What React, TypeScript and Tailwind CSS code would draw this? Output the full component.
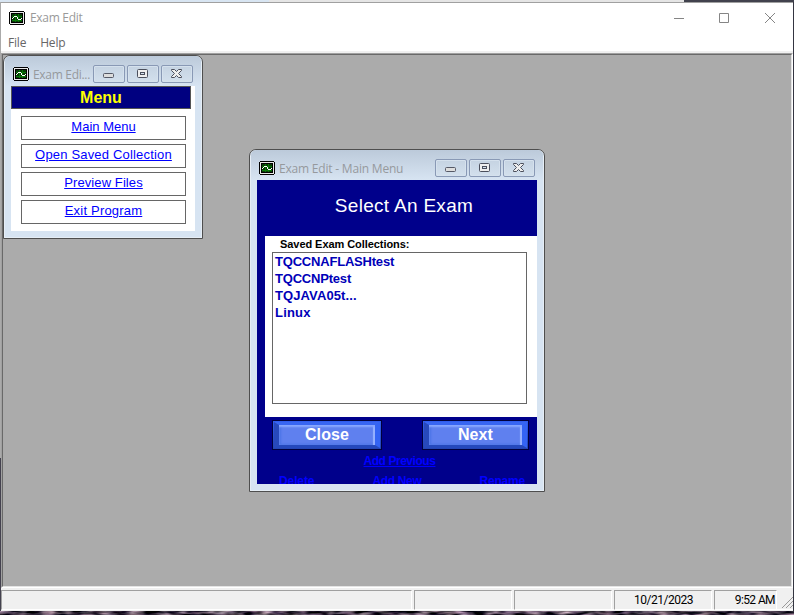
import type { ReactNode } from "react";

const ui = "font-['Open_Sans','Noto_Sans',sans-serif]";
const arial = "font-['Liberation_Sans',Arial,sans-serif]";

function AppIcon() {
  return (
    <svg width="16" height="14" viewBox="0 0 16 14" shapeRendering="crispEdges" className="shrink-0">
      <path d="M1 0h14v1h1v12h-1v1H1v-1H0V1h1z" fill="#000" />
      <path d="M1 1h14v12H1z" fill="#e8e8e8" />
      <path d="M2 2h12v10H2z" fill="#000" />
      <path d="M3 3h10v8H3z" fill="#063c06" />
      <path d="M3 5h10M3 9h10M6.500 3v8M9.500 3v8" stroke="#087808" fill="none" />
      <path d="M3 7h1v1H3zM4 6h1v1H4zM5 5h3v1H5zM8 6h1v2H8zM9 8h3v1H9zM12 7h1v1h-1z" fill="#fff" />
    </svg>
  );
}

function CaptionButtons() {
  const frame =
    "flex h-[18px] w-8 items-center justify-center rounded-[2px] border border-[#8999b5] bg-linear-to-b from-[#c5d3e2] to-[#d3e0ed] shadow-[inset_0_0_0_1px_#d5e1ed]";
  return (
    <div className="flex shrink-0 gap-0.5">
      <div className={frame}>
        <svg width="12" height="12">
          <rect x="0.500" y="5.500" width="10" height="4" rx="1" fill="#ddd" stroke="#555966" />
        </svg>
      </div>
      <div className={frame}>
        <svg width="12" height="12">
          <rect x="0.500" y="1.500" width="10" height="8" rx="1" fill="#eee" stroke="#4b4f5c" />
          <rect x="3.500" y="4.500" width="4" height="2" fill="#d5e1ed" stroke="#4b4f5c" />
        </svg>
      </div>
      <div className={frame}>
        <svg width="12" height="12">
          <path d="M.5 1.500H3.500L5.500 3.500L7.500 1.500H10.500V2.500L7.500 5.500L10.500 8.500V9.500H7.500L5.500 7.500L3.500 9.500H.5V8.500L3.500 5.500L.5 2.500Z" fill="#eee" stroke="#4b4f5c" />
        </svg>
      </div>
    </div>
  );
}

function ChildWindow({ title, place, titleClass, children }: { title: string; place: string; titleClass: string; children: ReactNode }) {
  return (
    <section className={`absolute flex flex-col overflow-hidden rounded-t-[7px] border border-[#4e4e4e] bg-[#d7e4f2] px-[7px] pb-[7px] shadow-[inset_0_0_0_1px_#e6eef6] ${place}`}>
      <header className="-mx-[6px] flex h-[30px] shrink-0 items-start rounded-t-[5px] bg-linear-to-b from-[#bccada] to-[#d7e4f2] pr-[8px] pl-[8px] pt-[9px]">
        <div className="pt-[2px]"><AppIcon /></div>
        <span className={`${ui} ml-1 h-[18px] grow text-[12px] leading-[20px] whitespace-nowrap text-[#96999d] ${titleClass}`}>{title}</span>
        <CaptionButtons />
      </header>
      {children}
    </section>
  );
}

const menuItems = [
  { text: "Main Menu", spacing: "tracking-[0px]" },
  { text: "Open Saved Collection", spacing: "tracking-[0.18px]" },
  { text: "Preview Files", spacing: "tracking-[0.1px]" },
  { text: "Exit Program", spacing: "tracking-[0.2px]" },
];

function BevelButton({ text, width }: { text: string; width: string }) {
  return (
    <div className={`${width} h-[30px] border border-[#00003c] bg-linear-to-b from-[#2f5df0] to-[#2344b4] p-px`}>
      <div className="flex h-full items-center justify-center border-y-[3px] border-r-[5px] border-l-[5px] border-t-[#3866f2] border-r-[#3464f4] border-b-[#2549bd] border-l-[#2749bb] bg-[#5f80ef] shadow-[inset_0_2px_2px_#8aa8ff,inset_-2px_0_1px_#9bb4ff,inset_2px_-1px_2px_#4770e6]">
        <span className={`${arial} text-[16px] leading-[18px] font-bold tracking-[0.1px] text-white`}>{text}</span>
      </div>
    </div>
  );
}

export default function App() {
  const cell = "h-5 border border-t-[#a0a0a0] border-l-[#a0a0a0] border-r-white border-b-white";
  return (
    <div className="flex h-[615px] w-[794px] flex-col overflow-hidden bg-[#343541]">
      <div className="flex h-0.5 shrink-0">
        <div className="w-[269px] bg-[#d8e5f2]" />
        <div className="w-[415px] bg-[#e5e5e5]" />
        <div className="grow bg-[#41424d]" />
      </div>
      <div className="flex h-[609px] shrink-0">
        <div className="flex w-px flex-col">
          <div className="h-[456px] bg-[#aaa]" />
          <div className="grow bg-[#44424f]" />
        </div>
        <main className="flex w-[792px] flex-col border-t border-[#a0a0a0] bg-[#f0f0f0]">
          <div className="flex h-[30px] shrink-0 items-center bg-white pl-2 pb-px">
            <AppIcon />
            <span className={`${ui} ml-[5px] pt-px text-[12px] tracking-[-0.3px] text-[#999]`}>Exam Edit</span>
            <svg className="ml-auto mr-[17px]" width="103" height="14" fill="none" stroke="#858585">
              <path d="M1 7.500h10M46.500 2.500h9v9h-9zM92 2l10 10M102 2l-10 10" />
            </svg>
          </div>
          <nav className={`${ui} flex h-[18px] shrink-0 items-center gap-[14px] bg-white pt-[2px] pl-[7px] text-[12px] tracking-[-0.2px] text-[#666]`}>
            <span>File</span>
            <span>Help</span>
          </nav>
          <div className="h-0.5 shrink-0 bg-[#f0f0f0]" />
          <div className="h-[535px] shrink-0 border border-t-[#a0a0a0] border-r-white border-b-white border-l-[#a0a0a0]">
            <div className="relative h-[533px] border border-t-[#696969] border-r-[#e3e3e3] border-b-[#e3e3e3] border-l-[#696969] bg-[#ababab]">
              <ChildWindow title="Exam Edi..." place="left-0 top-0 h-[184px] w-[200px]" titleClass="tracking-[-0.3px]">
                <div className="flex h-[145px] flex-col bg-white">
                  <h1 className={`${arial} mr-1 flex h-[23px] items-center justify-center border border-[#555] bg-[#000080] text-[16px] font-bold text-[#ff0]`}>Menu</h1>
                  <div className="mt-[7px] ml-[10px] flex w-[165px] flex-col gap-1">
                    {menuItems.map((item) => (
                      <div key={item.text} className={`${arial} h-6 border border-[#666] text-center text-[13px] leading-[20px] text-[#00f] underline ${item.spacing}`}>
                        {item.text}
                      </div>
                    ))}
                  </div>
                </div>
              </ChildWindow>
              <ChildWindow title="Exam Edit - Main Menu" place="left-[246px] top-[94px] h-[343px] w-[296px]" titleClass="tracking-[-0.2px]">
                <div className="flex h-[304px] flex-col overflow-hidden bg-[#00008b]">
                  <h2 className={`${arial} flex h-14 shrink-0 items-center justify-center pl-[14px] pb-[3px] text-[19px] tracking-[0.3px] text-white`}>Select An Exam</h2>
                  <div className={`${arial} ml-2 h-[181px] shrink-0 bg-white pl-[7px]`}>
                    <div className="h-4 pl-2 text-[11px] leading-[16px] font-bold tracking-[-0.06px] text-black">Saved Exam Collections:</div>
                    <ul className="h-[152px] w-[255px] border border-[#666] pl-[2px] text-[13px] leading-[17px] font-bold text-[#0000b8]">
                      <li className="tracking-[-0.2px]">TQCCNAFLASHtest</li>
                      <li className="tracking-[-0.2px]">TQCCNPtest</li>
                      <li className="tracking-[0.1px]">TQJAVA05t...</li>
                      <li className="tracking-[0.2px]">Linux</li>
                    </ul>
                  </div>
                  <div className="mt-[3px] flex shrink-0 justify-between pr-2 pl-[15px]">
                    <BevelButton text="Close" width="w-[110px]" />
                    <BevelButton text="Next" width="w-[107px]" />
                  </div>
                  <div className={`${arial} shrink-0 pt-[2px] pl-[5px] text-center text-[12px] leading-[18px] font-bold tracking-[-0.45px] text-[#00f] underline`}>Add Previous</div>
                  <div className={`${arial} flex shrink-0 justify-between pt-[2px] pr-3 pl-[22px] text-[12px] leading-[18px] font-bold tracking-[-0.2px] text-[#00f] underline`}>
                    <span className="tracking-[-0.1px]">Delete</span><span className="tracking-[-0.35px]">Add New</span><span>Rename</span>
                  </div>
                </div>
              </ChildWindow>
            </div>
          </div>
          <footer className="flex h-[22px] shrink-0 gap-0.5 border-b border-white pt-[2px] text-[12px] text-black">
            <div className={`${cell} w-[411px]`} />
            <div className={`${cell} w-[98px]`} />
            <div className={`${cell} w-[98px]`} />
            <div className={`${cell} w-[98px] pl-px text-center font-['Roboto',sans-serif] leading-[19px] tracking-[-0.5px]`}>10/21/2023</div>
            <div className={`${cell} w-[63px] pr-px text-right font-['Roboto',sans-serif] leading-[19px] tracking-[-0.6px]`}>9:52 AM</div>
            <svg width="12" height="18" stroke="#999" className="ml-auto shrink-0"><path d="M1 18L12 7M5 18L12 11M9 18L12 15" /></svg>
          </footer>
        </main>
      </div>
      <svg width="794" height="4" className="shrink-0">
        <filter id="ground" x="0" y="0" width="100%" height="100%" colorInterpolationFilters="sRGB">
          <feTurbulence type="fractalNoise" baseFrequency="0.07 0.3" numOctaves="2" seed="4" />
          <feColorMatrix values="1.400 0 0 0 -0.42 1.200 0.1 0 0 -0.42 1.250 0 0.1 0 -0.38 0 0 0 0 1" />
        </filter>
        <rect width="794" height="4" filter="url(#ground)" />
      </svg>
    </div>
  );
}
